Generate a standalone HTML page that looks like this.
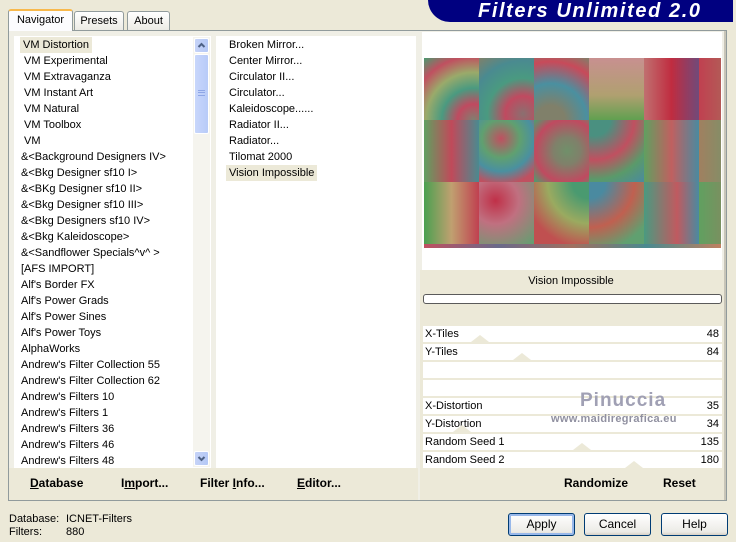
<!DOCTYPE html>
<html><head><style>
*{margin:0;padding:0;box-sizing:border-box}
body{width:736px;height:542px;background:#ece9d8;font-family:"Liberation Sans",sans-serif;font-size:11px;color:#000;position:relative;overflow:hidden}
.a{position:absolute}
.tab{position:absolute;border:1px solid #919b9c;border-bottom:none;background:linear-gradient(#fff,#ecebe5);text-align:center;border-radius:3px 3px 0 0;height:19px;top:11px;line-height:18px}
.it{position:absolute;height:16px;line-height:16px;white-space:nowrap}
.sel{background:#ece9d8;padding:0 3px}
.row{position:absolute;left:423px;width:299px;height:16px;background:#fff;line-height:16px}
.row span{position:absolute;left:2px}
.row b{position:absolute;right:3px;font-weight:normal}
.thumb{position:absolute;bottom:0;width:0;height:0;border-left:9px solid transparent;border-right:9px solid transparent;border-bottom:7px solid #ece9d8}
.btn{position:absolute;top:513px;width:67px;height:23px;border:1px solid #003c74;border-radius:3px;background:linear-gradient(#fff,#ecebe6 85%,#d6d0c5);text-align:center;line-height:21px;font-size:12px}
.bb{position:absolute;font-weight:bold;font-size:12px;top:476px}
.t{position:absolute;width:55px;height:62px}
.sb{position:absolute;left:194px;width:15px;height:15px;background:linear-gradient(90deg,#c6d3f7,#b4c8f6);border:1px solid #fff;border-radius:2px}
</style></head><body>
<!-- logo -->
<div class="a" style="left:428px;top:0;width:305px;height:22px;background:#000080;border-radius:0 0 0 30px"></div>
<div class="a" style="left:478px;top:0px;color:#fff;font-weight:bold;font-style:italic;font-size:20px;letter-spacing:1.6px;line-height:22px">Filters Unlimited 2.0</div>
<!-- tabs -->
<div class="a" style="left:8px;top:30px;width:719px;height:471px;border:1px solid #919b9c;background:#f0efe6"></div>
<div class="tab" style="left:74px;width:50px">Presets</div>
<div class="tab" style="left:127px;width:43px">About</div>
<div class="tab" style="left:8px;width:65px;top:9px;height:22px;background:#fcfcfe;border-top:2px solid #f8b94c;border-bottom:none">Navigator</div>
<div class="a" style="left:14px;top:36px;width:197px;height:432px;background:#fff"></div>
<div class="a" style="left:216px;top:36px;width:200px;height:432px;background:#fff"></div>
<div class="a" style="left:422px;top:32px;width:300px;height:238px;background:#fff"></div>
<div class="a" style="left:9px;top:468px;width:409px;height:32px;background:#ece9d8"></div>
<div class="a" style="left:420px;top:270px;width:304px;height:230px;background:#ece9d8"></div>
<div class="a" style="left:724px;top:31px;width:2px;height:469px;background:#c8c5b8"></div>
<!-- scrollbar -->
<div class="a" style="left:193px;top:37px;width:17px;height:430px;background:#f5f4ee"></div>
<div class="sb" style="top:38px"><svg width="13" height="13" style="position:absolute;left:0;top:0"><path d="M3.5 8 L6.5 5 L9.5 8" stroke="#4d6185" stroke-width="2" fill="none"/></svg></div>
<div class="a" style="left:194px;top:54px;width:15px;height:80px;background:linear-gradient(90deg,#c8d6fb,#b8cbf8);border:1px solid #fff;border-radius:2px"></div>
<div class="a" style="left:198px;top:90px;width:7px;height:6px;border-top:1px solid #8ea6e6;border-bottom:1px solid #8ea6e6"></div>
<div class="a" style="left:198px;top:92px;width:7px;height:1px;background:#8ea6e6"></div>
<div class="sb" style="top:451px"><svg width="13" height="13" style="position:absolute;left:0;top:0"><path d="M3.5 5 L6.5 8 L9.5 5" stroke="#4d6185" stroke-width="2" fill="none"/></svg></div>
<!-- left list -->
<div class="it sel" style="left:20px;top:37px">VM Distortion</div>
<div class="it" style="left:24px;top:53px">VM Experimental</div>
<div class="it" style="left:24px;top:69px">VM Extravaganza</div>
<div class="it" style="left:24px;top:85px">VM Instant Art</div>
<div class="it" style="left:24px;top:101px">VM Natural</div>
<div class="it" style="left:24px;top:117px">VM Toolbox</div>
<div class="it" style="left:24px;top:133px">VM</div>
<div class="it" style="left:21px;top:149px">&amp;&lt;Background Designers IV&gt;</div>
<div class="it" style="left:21px;top:165px">&amp;&lt;Bkg Designer sf10 I&gt;</div>
<div class="it" style="left:21px;top:181px">&amp;&lt;BKg Designer sf10 II&gt;</div>
<div class="it" style="left:21px;top:197px">&amp;&lt;Bkg Designer sf10 III&gt;</div>
<div class="it" style="left:21px;top:213px">&amp;&lt;Bkg Designers sf10 IV&gt;</div>
<div class="it" style="left:21px;top:229px">&amp;&lt;Bkg Kaleidoscope&gt;</div>
<div class="it" style="left:21px;top:245px">&amp;&lt;Sandflower Specials^v^ &gt;</div>
<div class="it" style="left:21px;top:261px">[AFS IMPORT]</div>
<div class="it" style="left:21px;top:277px">Alf's Border FX</div>
<div class="it" style="left:21px;top:293px">Alf's Power Grads</div>
<div class="it" style="left:21px;top:309px">Alf's Power Sines</div>
<div class="it" style="left:21px;top:325px">Alf's Power Toys</div>
<div class="it" style="left:21px;top:341px">AlphaWorks</div>
<div class="it" style="left:21px;top:357px">Andrew's Filter Collection 55</div>
<div class="it" style="left:21px;top:373px">Andrew's Filter Collection 62</div>
<div class="it" style="left:21px;top:389px">Andrew's Filters 10</div>
<div class="it" style="left:21px;top:405px">Andrew's Filters 1</div>
<div class="it" style="left:21px;top:421px">Andrew's Filters 36</div>
<div class="it" style="left:21px;top:437px">Andrew's Filters 46</div>
<div class="it" style="left:21px;top:453px">Andrew's Filters 48</div>
<!-- middle list -->
<div class="it" style="left:229px;top:37px">Broken Mirror...</div>
<div class="it" style="left:229px;top:53px">Center Mirror...</div>
<div class="it" style="left:229px;top:69px">Circulator II...</div>
<div class="it" style="left:229px;top:85px">Circulator...</div>
<div class="it" style="left:229px;top:101px">Kaleidoscope......</div>
<div class="it" style="left:229px;top:117px">Radiator II...</div>
<div class="it" style="left:229px;top:133px">Radiator...</div>
<div class="it" style="left:229px;top:149px">Tilomat 2000</div>
<div class="it sel" style="left:226px;top:165px">Vision Impossible</div>
<!-- preview image -->
<div class="a" style="left:424px;top:58px;width:297px;height:190px;overflow:hidden;background:#8a8a70">
<div class="t" style="left:0;top:0;background:radial-gradient(circle at 90% 100%,#808070 0,#c04a60 20%,#4a9a80 40%,#9aaa6a 60%,#c05060 80%,#4a9a70)"></div>
<div class="t" style="left:55px;top:0;background:radial-gradient(circle at 80% 90%,#8a7070,#c04a60 25%,#4a9a80 50%,#4a8a90 75%,#80806a)"></div>
<div class="t" style="left:110px;top:0;background:radial-gradient(circle at 30% 100%,#80806a 20%,#4a90a0 50%,#c84a5a 80%,#80806a)"></div>
<div class="t" style="left:165px;top:0;background:linear-gradient(#c89090,#b0a070 60%,#60a050)"></div>
<div class="t" style="left:220px;top:0;background:linear-gradient(90deg,#c07070,#c02c40 50%,#704a7a)"></div>
<div class="t" style="left:275px;top:0;background:linear-gradient(90deg,#c04050,#a08060)"></div>
<div class="t" style="left:0;top:62px;background:linear-gradient(90deg,#60a060,#c04a5a 50%,#4a8a90)"></div>
<div class="t" style="left:55px;top:62px;background:radial-gradient(circle at 40% 30%,#c05060,#60a070 35%,#4a90a0 60%,#c05060 85%)"></div>
<div class="t" style="left:110px;top:62px;background:radial-gradient(circle at 60% 50%,#70906a,#80806a 30%,#c04a60 70%,#4aa070)"></div>
<div class="t" style="left:165px;top:62px;background:radial-gradient(circle at 10% 0%,#4a9080 20%,#c05060 50%,#5a9a6a 75%,#4a8aa0)"></div>
<div class="t" style="left:220px;top:62px;background:linear-gradient(90deg,#60a060,#c06060 50%,#4a8aa0)"></div>
<div class="t" style="left:275px;top:62px;background:linear-gradient(90deg,#a08060,#60a070)"></div>
<div class="t" style="left:0;top:124px;background:linear-gradient(90deg,#4aa050,#c0a070 50%,#c04050)"></div>
<div class="t" style="left:55px;top:124px;background:radial-gradient(circle at 30% 30%,#c03048,#c07080 40%,#60a070)"></div>
<div class="t" style="left:110px;top:124px;background:radial-gradient(circle at 100% 0%,#4a9a70 20%,#9aaa60 50%,#c05050 80%)"></div>
<div class="t" style="left:165px;top:124px;background:radial-gradient(circle at 0% 0%,#4a8aa0 20%,#c06050 55%,#60a070 85%)"></div>
<div class="t" style="left:220px;top:124px;background:linear-gradient(90deg,#4a9a80,#c05a60 60%,#4a8aa0)"></div>
<div class="t" style="left:275px;top:124px;background:linear-gradient(90deg,#60a060,#a07a60)"></div>
<div class="a" style="left:0;top:186px;width:297px;height:4px;background:linear-gradient(90deg,#c05060,#6a6a8a,#a07060,#4a8a90,#c08060)"></div>
</div>
<!-- slider area -->
<div class="a" style="left:420px;top:275px;width:302px;text-align:center;font-size:11px">Vision Impossible</div>
<div class="a" style="left:423px;top:294px;width:299px;height:10px;border:1px solid #5a5a5a;border-radius:3px;background:#fff"></div>
<div class="row" style="top:326px"><span>X-Tiles</span><b>48</b><div class="thumb" style="left:48px"></div></div>
<div class="row" style="top:344px"><span>Y-Tiles</span><b>84</b><div class="thumb" style="left:90px"></div></div>
<div class="row" style="top:362px"></div>
<div class="row" style="top:380px"></div>
<div class="row" style="top:398px"><span>X-Distortion</span><b>35</b></div>
<div class="row" style="top:416px"><span>Y-Distortion</span><b>34</b><div class="thumb" style="left:30px"></div></div>
<div class="row" style="top:434px"><span>Random Seed 1</span><b>135</b><div class="thumb" style="left:150px"></div></div>
<div class="row" style="top:452px"><span>Random Seed 2</span><b>180</b><div class="thumb" style="left:202px"></div></div>
<div class="a" style="left:580px;top:390px;color:#a0a0b4;font-size:19px;font-weight:bold;letter-spacing:1px">Pinuccia</div>
<div class="a" style="left:551px;top:413px;color:#9090a0;font-size:11px;font-weight:bold;letter-spacing:0.3px">www.maidiregrafica.eu</div>
<div class="bb" style="left:564px">Randomize</div>
<div class="bb" style="left:663px">Reset</div>
<div class="bb" style="left:30px"><u>D</u>atabase</div>
<div class="bb" style="left:121px">I<u>m</u>port...</div>
<div class="bb" style="left:200px">Filter <u>I</u>nfo...</div>
<div class="bb" style="left:297px"><u>E</u>ditor...</div>
<!-- status -->
<div class="a" style="left:9px;top:513px">Database:</div>
<div class="a" style="left:66px;top:513px">ICNET-Filters</div>
<div class="a" style="left:9px;top:526px">Filters:</div>
<div class="a" style="left:66px;top:526px">880</div>
<div class="btn" style="left:508px;box-shadow:inset 0 0 0 2px #98b8ea">Apply</div>
<div class="btn" style="left:584px">Cancel</div>
<div class="btn" style="left:661px">Help</div>
</body></html>
